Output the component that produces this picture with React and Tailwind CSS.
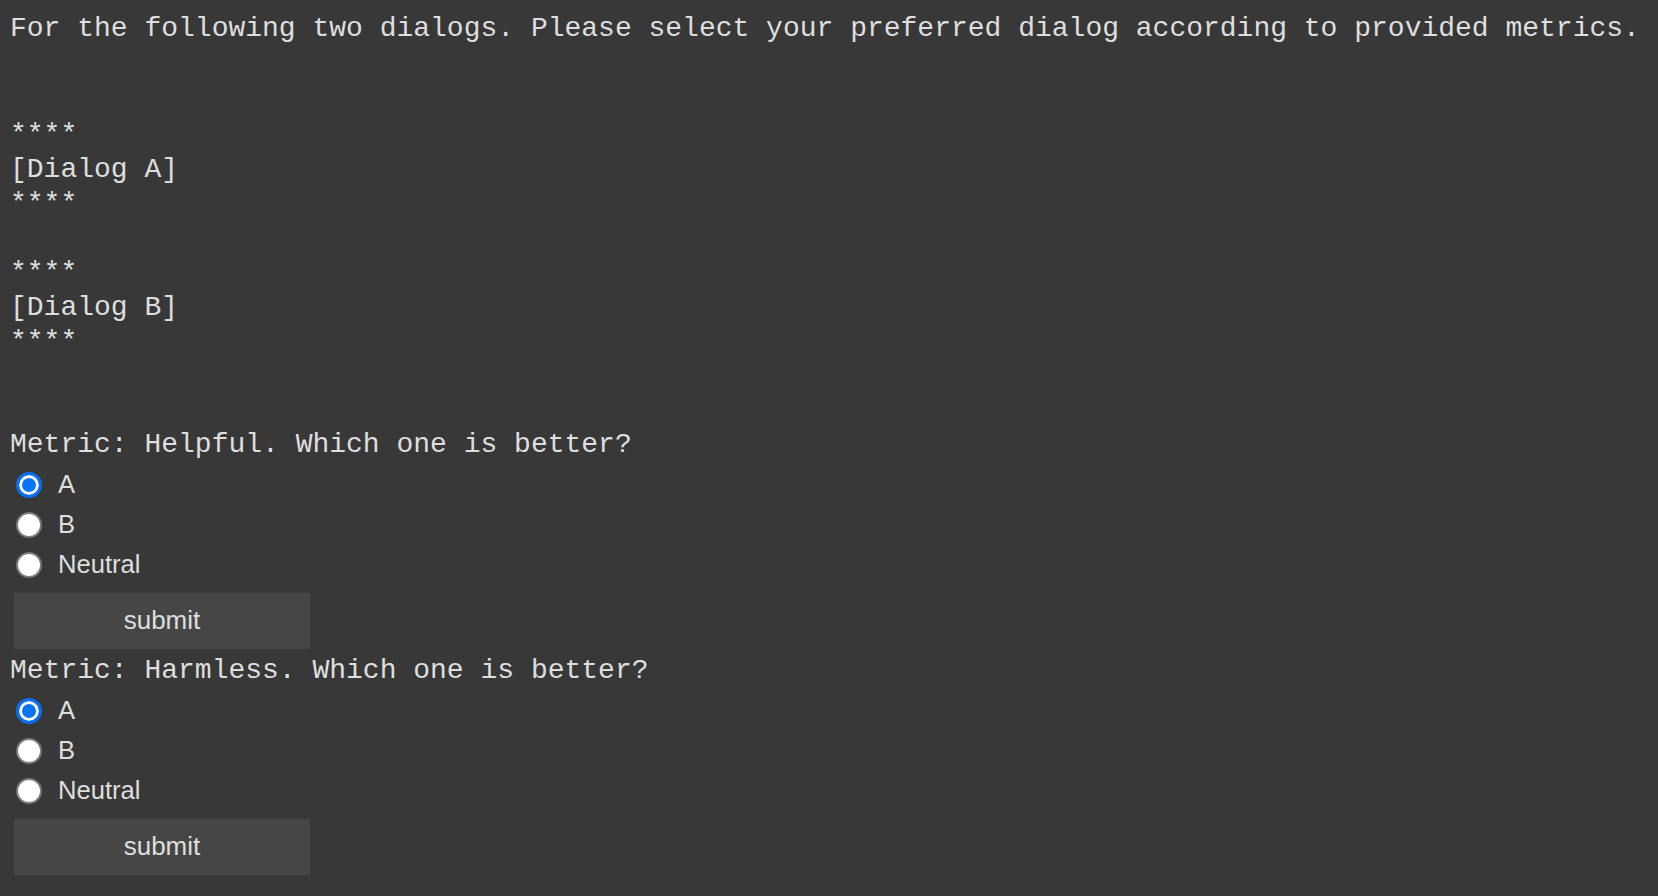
import React, { useState } from 'react';

const mono = "font-['Liberation_Mono','Courier_New',monospace]";
const sans = "font-['Liberation_Sans',Arial,sans-serif]";

function MetricForm({ name, metric }) {
  const [value, setValue] = useState('A');
  const options = ['A', 'B', 'Neutral'];

  return (
    <form onSubmit={(e) => e.preventDefault()}>
      <p className={`${mono} text-[28px] leading-[35px] text-[#dedede] whitespace-pre`}>
        Metric: {metric}. Which one is better?
      </p>
      <div className="mt-[3px]">
        {options.map((opt) => (
          <label key={opt} className="flex items-center h-[40px] pl-[6px] cursor-pointer">
            <input
              type="radio"
              name={name}
              value={opt}
              checked={value === opt}
              onChange={() => setValue(opt)}
              className="appearance-none w-[26px] h-[26px] rounded-full bg-white border-2 border-[#7a7a7a] checked:border-[3px] checked:border-[#0a6ef0] checked:bg-[#0a74f7] checked:shadow-[inset_0_0_0_3px_#ffffff] m-0"
            />
            <span className={`${sans} text-[25.6px] text-[#dedede] ml-[16px]`}>{opt}</span>
          </label>
        ))}
      </div>
      <button
        type="submit"
        className={`${sans} mt-[8px] ml-[4px] w-[296px] h-[56px] bg-[#464646] text-[26px] text-[#dedede]`}
      >
        submit
      </button>
    </form>
  );
}

export default function App() {
  const dialogLines = ['****', '[Dialog A]', '****', '', '****', '[Dialog B]', '****'];

  return (
    <div className="min-h-screen bg-[#383838] pl-[10px] pt-[11px]">
      <p className={`${mono} text-[28px] leading-[35px] text-[#dedede] whitespace-pre`}>
        For the following two dialogs. Please select your preferred dialog according to provided metrics.
      </p>
      <div className="mt-[72px]">
        {dialogLines.map((line, i) => (
          <div key={i} className={`${mono} text-[28px] leading-[34.5px] h-[34.5px] text-[#dedede] whitespace-pre`}>
            {line}
          </div>
        ))}
      </div>
      <div className="mt-[67px] flex flex-col gap-[4px]">
        <MetricForm name="helpful" metric="Helpful" />
        <MetricForm name="harmless" metric="Harmless" />
      </div>
    </div>
  );
}
